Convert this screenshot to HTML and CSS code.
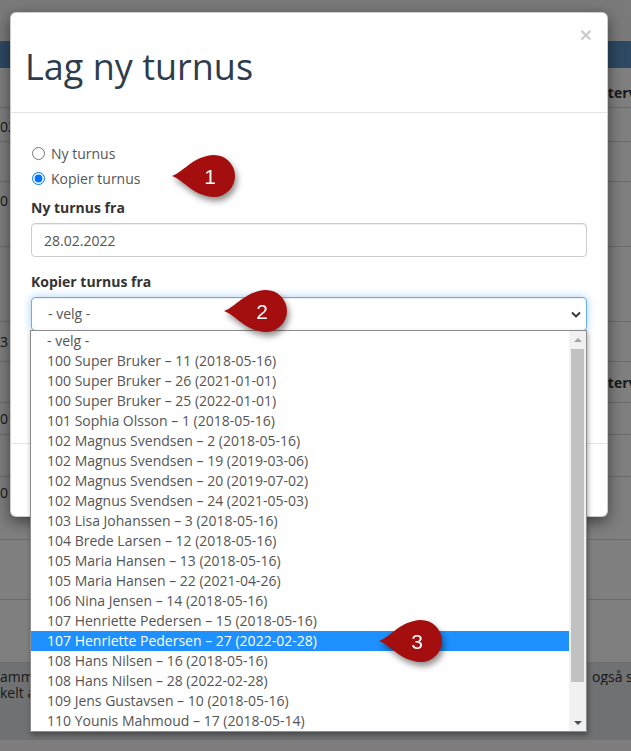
FILE: index.html
```html
<!DOCTYPE html>
<html lang="no">
  <head>
    <meta charset="UTF-8" />
    <meta name="viewport" content="width=device-width, initial-scale=1.0" />
    <link rel="stylesheet" href="styles.css">
    <title>Lag ny turnus</title>
  </head>
  <body>
    <div class="app">
      <div class="topbar"></div>
      <div class="navbar"></div>
      <div class="table">
        <div class="row th"><span></span><span>Intervall</span></div>
        <div class="row"><span>02.22</span><span></span></div>
        <div class="row"><span></span><span></span></div>
        <div class="row"><span>0</span><span></span></div>
        <div class="row"><span></span><span></span></div>
        <div class="row mid"><span>3</span><span></span></div>
        <div class="row th low"><span></span><span>Intervall</span></div>
        <div class="row tight"><span>01.21</span><span></span></div>
        <div class="row"><span></span><span></span></div>
        <div class="row tight"><span>0</span><span></span></div>
        <div class="row"><span></span><span></span></div>
        <div class="row"><span></span><span></span></div>
      </div>
      <div class="note">
        <div class="note-line"><span>ammen</span><span>også slette den</span></div>
        <div class="note-line"><span>kelt av</span><span></span></div>
      </div>

      <div class="backdrop"></div>

      <div class="modal">
        <div class="modal-header">
          <h1 class="modal-title">Lag ny turnus</h1>
          <button class="close">&times;</button>
        </div>
        <div class="modal-body">
          <div class="radios">
            <label class="radio"><input type="radio" name="mode"> Ny turnus</label>
            <label class="radio"><input type="radio" name="mode" checked> Kopier turnus</label>
          </div>
          <div class="form-group">
            <label class="control-label">Ny turnus fra</label>
            <input class="form-control" type="text" value="28.02.2022">
          </div>
          <div class="form-group">
            <label class="control-label">Kopier turnus fra</label>
            <div class="form-control select">
              <span>- velg -</span>
              <svg class="chevron" width="10" height="7" viewBox="0 0 10 7"><path d="M1 1.5 5 5.5 9 1.5" fill="none" stroke="#333" stroke-width="1.8"/></svg>
            </div>
          </div>
        </div>
        <div class="modal-footer"></div>
      </div>

      <div class="dropdown">
        <div class="options">
          <div class="option">- velg -</div>
          <div class="option">100 Super Bruker – 11 (2018-05-16)</div>
          <div class="option">100 Super Bruker – 26 (2021-01-01)</div>
          <div class="option">100 Super Bruker – 25 (2022-01-01)</div>
          <div class="option">101 Sophia Olsson – 1 (2018-05-16)</div>
          <div class="option">102 Magnus Svendsen – 2 (2018-05-16)</div>
          <div class="option">102 Magnus Svendsen – 19 (2019-03-06)</div>
          <div class="option">102 Magnus Svendsen – 20 (2019-07-02)</div>
          <div class="option">102 Magnus Svendsen – 24 (2021-05-03)</div>
          <div class="option">103 Lisa Johanssen – 3 (2018-05-16)</div>
          <div class="option">104 Brede Larsen – 12 (2018-05-16)</div>
          <div class="option">105 Maria Hansen – 13 (2018-05-16)</div>
          <div class="option">105 Maria Hansen – 22 (2021-04-26)</div>
          <div class="option">106 Nina Jensen – 14 (2018-05-16)</div>
          <div class="option">107 Henriette Pedersen – 15 (2018-05-16)</div>
          <div class="option selected">107 Henriette Pedersen – 27 (2022-02-28)</div>
          <div class="option">108 Hans Nilsen – 16 (2018-05-16)</div>
          <div class="option">108 Hans Nilsen – 28 (2022-02-28)</div>
          <div class="option">109 Jens Gustavsen – 10 (2018-05-16)</div>
          <div class="option">110 Younis Mahmoud – 17 (2018-05-14)</div>
        </div>
        <div class="scrollbar">
          <div class="arrow"><svg width="8" height="4" viewBox="0 0 8 4"><path d="M0 4 4 0 8 4Z" fill="#a3a3a3"/></svg></div>
          <div class="thumb"></div>
          <div class="arrow down"><svg width="8" height="4" viewBox="0 0 8 4"><path d="M0 0 4 4 8 0Z" fill="#505050"/></svg></div>
        </div>
      </div>

      <svg class="pin pin-1" width="66" height="46" viewBox="0 0 66 46">
        <path d="M1 22C14 17 22 2 43 1A21 21 0 0 1 43 43C22 42 14 27 1 22Z" fill="#a50e0e"/>
        <text x="39" y="29.5">1</text>
      </svg>
      <svg class="pin pin-2" width="66" height="46" viewBox="0 0 66 46">
        <path d="M1 22C14 17 22 2 43 1A21 21 0 0 1 43 43C22 42 14 27 1 22Z" fill="#a50e0e"/>
        <text x="39" y="29.5">2</text>
      </svg>
      <svg class="pin pin-3" width="66" height="46" viewBox="0 0 66 46">
        <path d="M1 22C14 17 22 2 43 1A21 21 0 0 1 43 43C22 42 14 27 1 22Z" fill="#a50e0e"/>
        <text x="39" y="29.5">3</text>
      </svg>
    </div>
  </body>
</html>
```

FILE: styles.css
```css
body {
  margin: 0;
  font-family: "Open Sans", sans-serif;
  font-size: 14px;
  color: #333;
}

.app {
  position: relative;
  width: 631px;
  height: 751px;
  overflow: hidden;
  background-color: #fafafa;
}

/* page behind the dialog */
.topbar {
  height: 41px;
  background-color: #f4f4f4;
}

.navbar {
  height: 27px;
  background-color: #5a93c6;
}

.table {
  display: grid;
  grid-template-rows: 40px 34px 40px 65px 75px 40px 41px 32px 42px 63px 60px 63px;
  background-color: #fff;
}

.row {
  display: grid;
  grid-template-columns: 594px 1fr;
  box-sizing: border-box;
  border-bottom: 1px solid #d8d8d8;
  padding-top: 9px;
  line-height: 20px;
  white-space: nowrap;
  overflow: hidden;
}

.row span,
.note-line span {
  overflow: hidden;
}

.row.th {
  padding-top: 15px;
  font-weight: 700;
}

.row.th.low {
  padding-top: 11px;
}

.row.mid {
  padding-top: 10px;
}

.row.tight {
  padding-top: 6px;
}

.note {
  height: 77px;
  box-sizing: border-box;
  padding-top: 6px;
  background-color: #dfe2e5;
  line-height: 16px;
}

.note-line {
  display: grid;
  grid-template-columns: 592px 1fr;
  white-space: nowrap;
  overflow: hidden;
}

.backdrop {
  position: absolute;
  inset: 0;
  background-color: rgba(0, 0, 0, 0.5);
}

/* dialog */
.modal {
  position: absolute;
  left: 10px;
  top: 12px;
  width: 598px;
  box-sizing: border-box;
  background-color: #fff;
  border: 1px solid rgba(0, 0, 0, 0.2);
  border-radius: 6px;
  box-shadow: 0 5px 15px rgba(0, 0, 0, 0.5);
}

.modal-header {
  display: flex;
  align-items: flex-start;
  height: 100px;
  box-sizing: border-box;
  padding: 0 15px 0 14px;
  border-bottom: 1px solid #e5e5e5;
}

.modal-title {
  margin: 34px 0 0;
  font-size: 36px;
  font-weight: 400;
  line-height: 1.1;
  color: #2e3d4c;
}

.close {
  margin: 11px 0 0 auto;
  padding: 0;
  border: none;
  background: none;
  font-family: "Liberation Sans", Arial, sans-serif;
  font-size: 21px;
  font-weight: 700;
  line-height: 1;
  color: #000;
  opacity: 0.2;
}

.modal-body {
  height: 330px;
  box-sizing: border-box;
  padding: 30px 20px 20px;
}

.radios {
  display: flex;
  flex-direction: column;
  gap: 5px;
  margin-bottom: 10px;
}

.radio {
  display: flex;
  align-items: center;
  height: 20px;
  color: #555;
}

.radio input {
  width: 13px;
  height: 13px;
  margin: 0 6px 0 1px;
}

.form-group {
  margin-bottom: 15px;
}

.control-label {
  display: block;
  margin-bottom: 5px;
  font-weight: 700;
  line-height: 20px;
  color: #333;
}

.form-control {
  display: block;
  width: 100%;
  height: 34px;
  box-sizing: border-box;
  padding: 6px 12px;
  border: 1px solid #ccc;
  border-radius: 4px;
  font-family: inherit;
  font-size: 14px;
  line-height: 20px;
  color: #555;
  box-shadow: inset 0 1px 1px rgba(0, 0, 0, 0.075);
}

.select {
  display: flex;
  align-items: center;
  padding-left: 16px;
  padding-right: 5px;
  border-color: #66afe9;
  box-shadow: inset 0 1px 1px rgba(0, 0, 0, 0.075), 0 0 8px rgba(102, 175, 233, 0.6);
}

.chevron {
  margin-left: auto;
}

.modal-footer {
  height: 73px;
  box-sizing: border-box;
  border-top: 1px solid #e5e5e5;
}

/* open option list of the select */
.dropdown {
  position: absolute;
  left: 30px;
  top: 330px;
  width: 557px;
  height: 402px;
  box-sizing: border-box;
  display: flex;
  background-color: #fff;
  border: 1px solid #8c8c8c;
  box-shadow: 1px 3px 5px rgba(0, 0, 0, 0.35);
}

.options {
  flex: 1;
}

.option {
  height: 20px;
  padding-left: 16px;
  line-height: 20px;
  color: #555;
  white-space: nowrap;
}

.option.selected {
  background-color: #1e90ff;
  color: #fff;
}

.scrollbar {
  width: 17px;
  display: flex;
  flex-direction: column;
  align-items: center;
  background-color: #f1f1f1;
}

.arrow {
  height: 17px;
  display: flex;
  align-items: center;
  justify-content: center;
}

.arrow.down {
  margin-top: auto;
}

.thumb {
  width: 13px;
  height: 333px;
  margin-top: 1px;
  background-color: #c1c1c1;
}

/* numbered callouts */
.pin {
  position: absolute;
  filter: drop-shadow(2px 4px 3px rgba(0, 0, 0, 0.45));
}

.pin text {
  font-family: "Liberation Sans", Arial, sans-serif;
  font-size: 21px;
  fill: #fff;
  text-anchor: middle;
}

.pin-1 {
  left: 171px;
  top: 154px;
}

.pin-2 {
  left: 223px;
  top: 289px;
}

.pin-3 {
  left: 378px;
  top: 619px;
}
```
